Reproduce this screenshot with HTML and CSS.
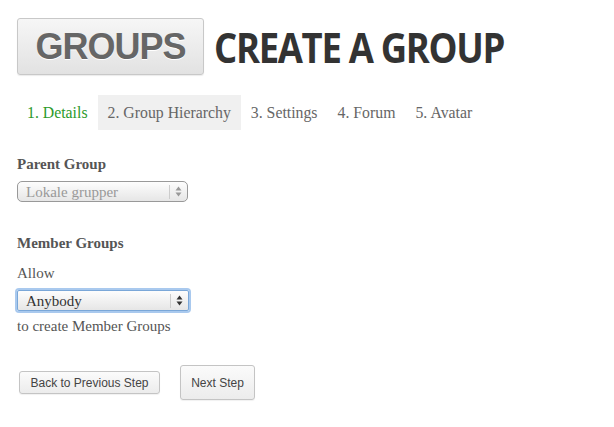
FILE: index.html
```html
<!DOCTYPE html>
<html>
<head>
<meta charset="utf-8">
<link rel="stylesheet" href="styles.css">
</head>
<body>
<div class="page">
  <header class="head">
    <div class="badge">GROUPS</div>
    <h1 class="title">CREATE A GROUP</h1>
  </header>
  <nav class="tabs">
    <span class="tab done">1. Details</span>
    <span class="tab current">2. Group Hierarchy</span>
    <span class="tab">3. Settings</span>
    <span class="tab">4. Forum</span>
    <span class="tab">5. Avatar</span>
  </nav>
  <section class="field">
    <div class="label">Parent Group</div>
    <div class="select disabled">
      <span class="val">Lokale grupper</span>
      <span class="arrow"><svg width="7" height="11" viewBox="0 0 7 11"><path d="M3.5 0.5 L6.5 4.5 H0.5 Z M3.5 10.5 L6.5 6.5 H0.5 Z" fill="#999"/></svg></span>
    </div>
  </section>
  <section class="field member">
    <div class="label">Member Groups</div>
    <div class="text allow">Allow</div>
    <div class="select focus">
      <span class="val">Anybody</span>
      <span class="arrow"><svg width="7" height="11" viewBox="0 0 7 11"><path d="M3.5 0.5 L6.5 4.5 H0.5 Z M3.5 10.5 L6.5 6.5 H0.5 Z" fill="#333"/></svg></span>
    </div>
    <div class="text">to create Member Groups</div>
  </section>
  <div class="buttons">
    <button class="btn back">Back to Previous Step</button>
    <button class="btn next">Next Step</button>
  </div>
</div>
</body>
</html>
```
FILE: styles.css
```css
* { box-sizing: border-box; }
html, body { margin: 0; padding: 0; background: #fff; }
.page { padding: 18px 17px; font-family: "Liberation Serif", serif; color: #555; }
.head { display: flex; align-items: center; gap: 10px; }
.badge {
  width: 187px; height: 57px;
  border: 1px solid #c8c8c8; border-radius: 3px;
  background: linear-gradient(#f6f6f6, #e2e2e2);
  box-shadow: 0 1px 1px rgba(0,0,0,0.08);
  display: flex; align-items: center; justify-content: center;
  font-family: "Liberation Sans", sans-serif; font-weight: bold;
  font-size: 36px; color: #666; letter-spacing: -1px;
  text-shadow: 0 1px 0 #fff;
}
.title {
  margin: 0; font-family: "Open Sans", sans-serif; font-weight: 700;
  font-size: 41px; color: #333; letter-spacing: -1.5px;
  transform: scaleX(0.89); transform-origin: left center;
  white-space: nowrap;
}
.tabs { display: flex; margin-top: 20px; height: 35px; align-items: stretch; }
.tab { display: flex; align-items: center; padding: 0 10px; font-size: 15.8px; color: #666; }
.tab.done { color: #2c9a2c; }
.tab.current { background: #f0f0f0; }
.field { margin-top: 25px; }
.label { font-weight: bold; font-size: 15px; color: #555; line-height: 18px; }
.text { font-size: 15px; color: #555; line-height: 18px; }
.select {
  display: flex; align-items: center; width: 171px; height: 21px;
  margin-top: 8px; border: 1px solid #999; border-radius: 5px;
  background: linear-gradient(#fdfdfd, #e6e6e6);
  font-size: 15px;
}
.select .val { flex: 1; padding-left: 8px; line-height: 18px; }
.select .arrow {
  width: 18px; height: 14px; border-left: 1px solid #ccc;
  display: flex; align-items: center; justify-content: center;
}
.select.disabled { color: #999; border-color: #999; }
.select.focus {
  color: #333; width: 172px; height: 21px; margin: 8px 0 6px; border-radius: 2px;
  border-color: #7aa7d8; box-shadow: 0 0 0 2px #a9c9ee;
}
.member { margin-top: 32px; }
.allow { margin-top: 12px; }
.buttons { display: flex; align-items: center; gap: 20px; margin-top: 30px; padding-left: 2px; }
.btn {
  font-family: "Liberation Sans", sans-serif; font-size: 12px; color: #444;
  border: 1px solid #c4c4c4; border-radius: 3px;
  background: linear-gradient(#fbfbfb, #ececec);
  box-shadow: 0 1px 1px rgba(0,0,0,0.06);
  padding: 0;
}
.btn.back { width: 141px; height: 23px; }
.btn.next { width: 75px; height: 35px; }
```
